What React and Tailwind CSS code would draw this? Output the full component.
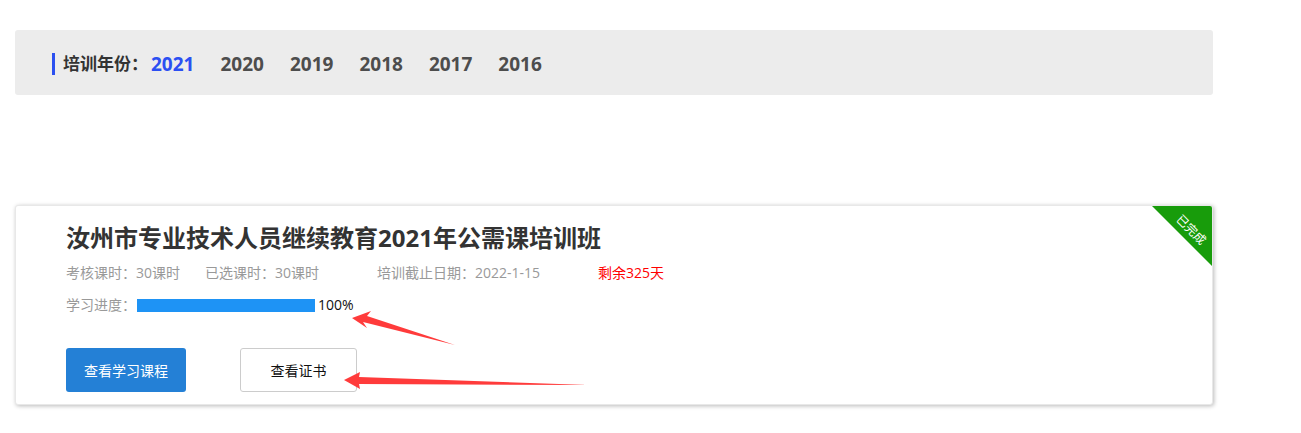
const years = ['2021', '2020', '2019', '2018', '2017', '2016'];

function YearBar() {
  return (
    <div className="flex h-[65px] w-[1198px] items-center rounded-[3px] bg-[#ececec] pl-[37px] pt-[3px]">
      <div className="mr-[8px] h-[22px] w-[3px] bg-[#2b50f0]" />
      <span className="mr-[3px] text-[17px] font-bold text-[#333]">培训年份：</span>
      <div className="flex gap-[26px]">
        {years.map((y, i) => (
          <span
            key={y}
            className={i === 0 ? 'text-[19px] font-bold text-[#2b4ff2]' : 'text-[19px] font-bold text-[#4d4d4d]'}
          >
            {y}
          </span>
        ))}
      </div>
    </div>
  );
}

function CourseCard() {
  return (
    <div className="relative h-[200px] w-[1198px] overflow-hidden rounded-[3px] border border-[#e8e8e8] bg-white pl-[50px] pt-[14px] shadow-[1px_1px_4px_rgba(0,0,0,0.28)]">
      {/* 已完成 corner ribbon */}
      <div className="absolute right-0 top-0 h-[60px] w-[60px] bg-[#189c0b] [clip-path:polygon(0_0,100%_0,100%_100%)]" />
      <span className="absolute right-[3px] top-[15px] rotate-45 text-[12px] text-white">已完成</span>

      <h2 className="text-[24px] font-bold leading-[36px] text-[#333]">汝州市专业技术人员继续教育2021年公需课培训班</h2>

      <div className="mt-[7px] flex text-[14px] leading-[20px] text-[#999]">
        <span className="mr-[25px]">考核课时：30课时</span>
        <span className="mr-[58px]">已选课时：30课时</span>
        <span className="mr-[58px]">培训截止日期：2022-1-15</span>
        <span className="text-[#ff0000]">剩余325天</span>
      </div>

      <div className="mt-[12px] flex items-center text-[14px] leading-[20px]">
        <span className="w-[71px] text-[#999]">学习进度：</span>
        <div className="h-[13px] w-[178px] bg-[#1e93f5]" />
        <span className="ml-[3px] text-[#111]">100%</span>
      </div>

      <div className="mt-[33px] flex gap-[54px]">
        <button className="h-[44px] w-[120px] rounded-[3px] bg-[#2480d6] text-[14px] text-white">查看学习课程</button>
        <button className="h-[44px] w-[117px] rounded-[3px] border border-[#ccc] bg-white text-[14px] text-[#111]">查看证书</button>
      </div>
    </div>
  );
}

export default function App() {
  return (
    <div
      className="relative h-[433px] w-[1301px] bg-white pl-[15px] pt-[30px]"
      style={{ fontFamily: "'Open Sans', 'Noto Sans CJK SC', sans-serif" }}
    >
      <YearBar />
      <div className="mt-[110px]">
        <CourseCard />
      </div>

      {/* red annotation arrows */}
      <svg className="pointer-events-none absolute left-0 top-0" width="1301" height="433">
        <polygon points="352,318 371,311 367,316 455,345 363,322 367,328" fill="#ff3b3b" />
        <polygon points="344,380 360,372 359,377 588,385 359,384 360,389" fill="#ff3b3b" />
      </svg>
    </div>
  );
}
